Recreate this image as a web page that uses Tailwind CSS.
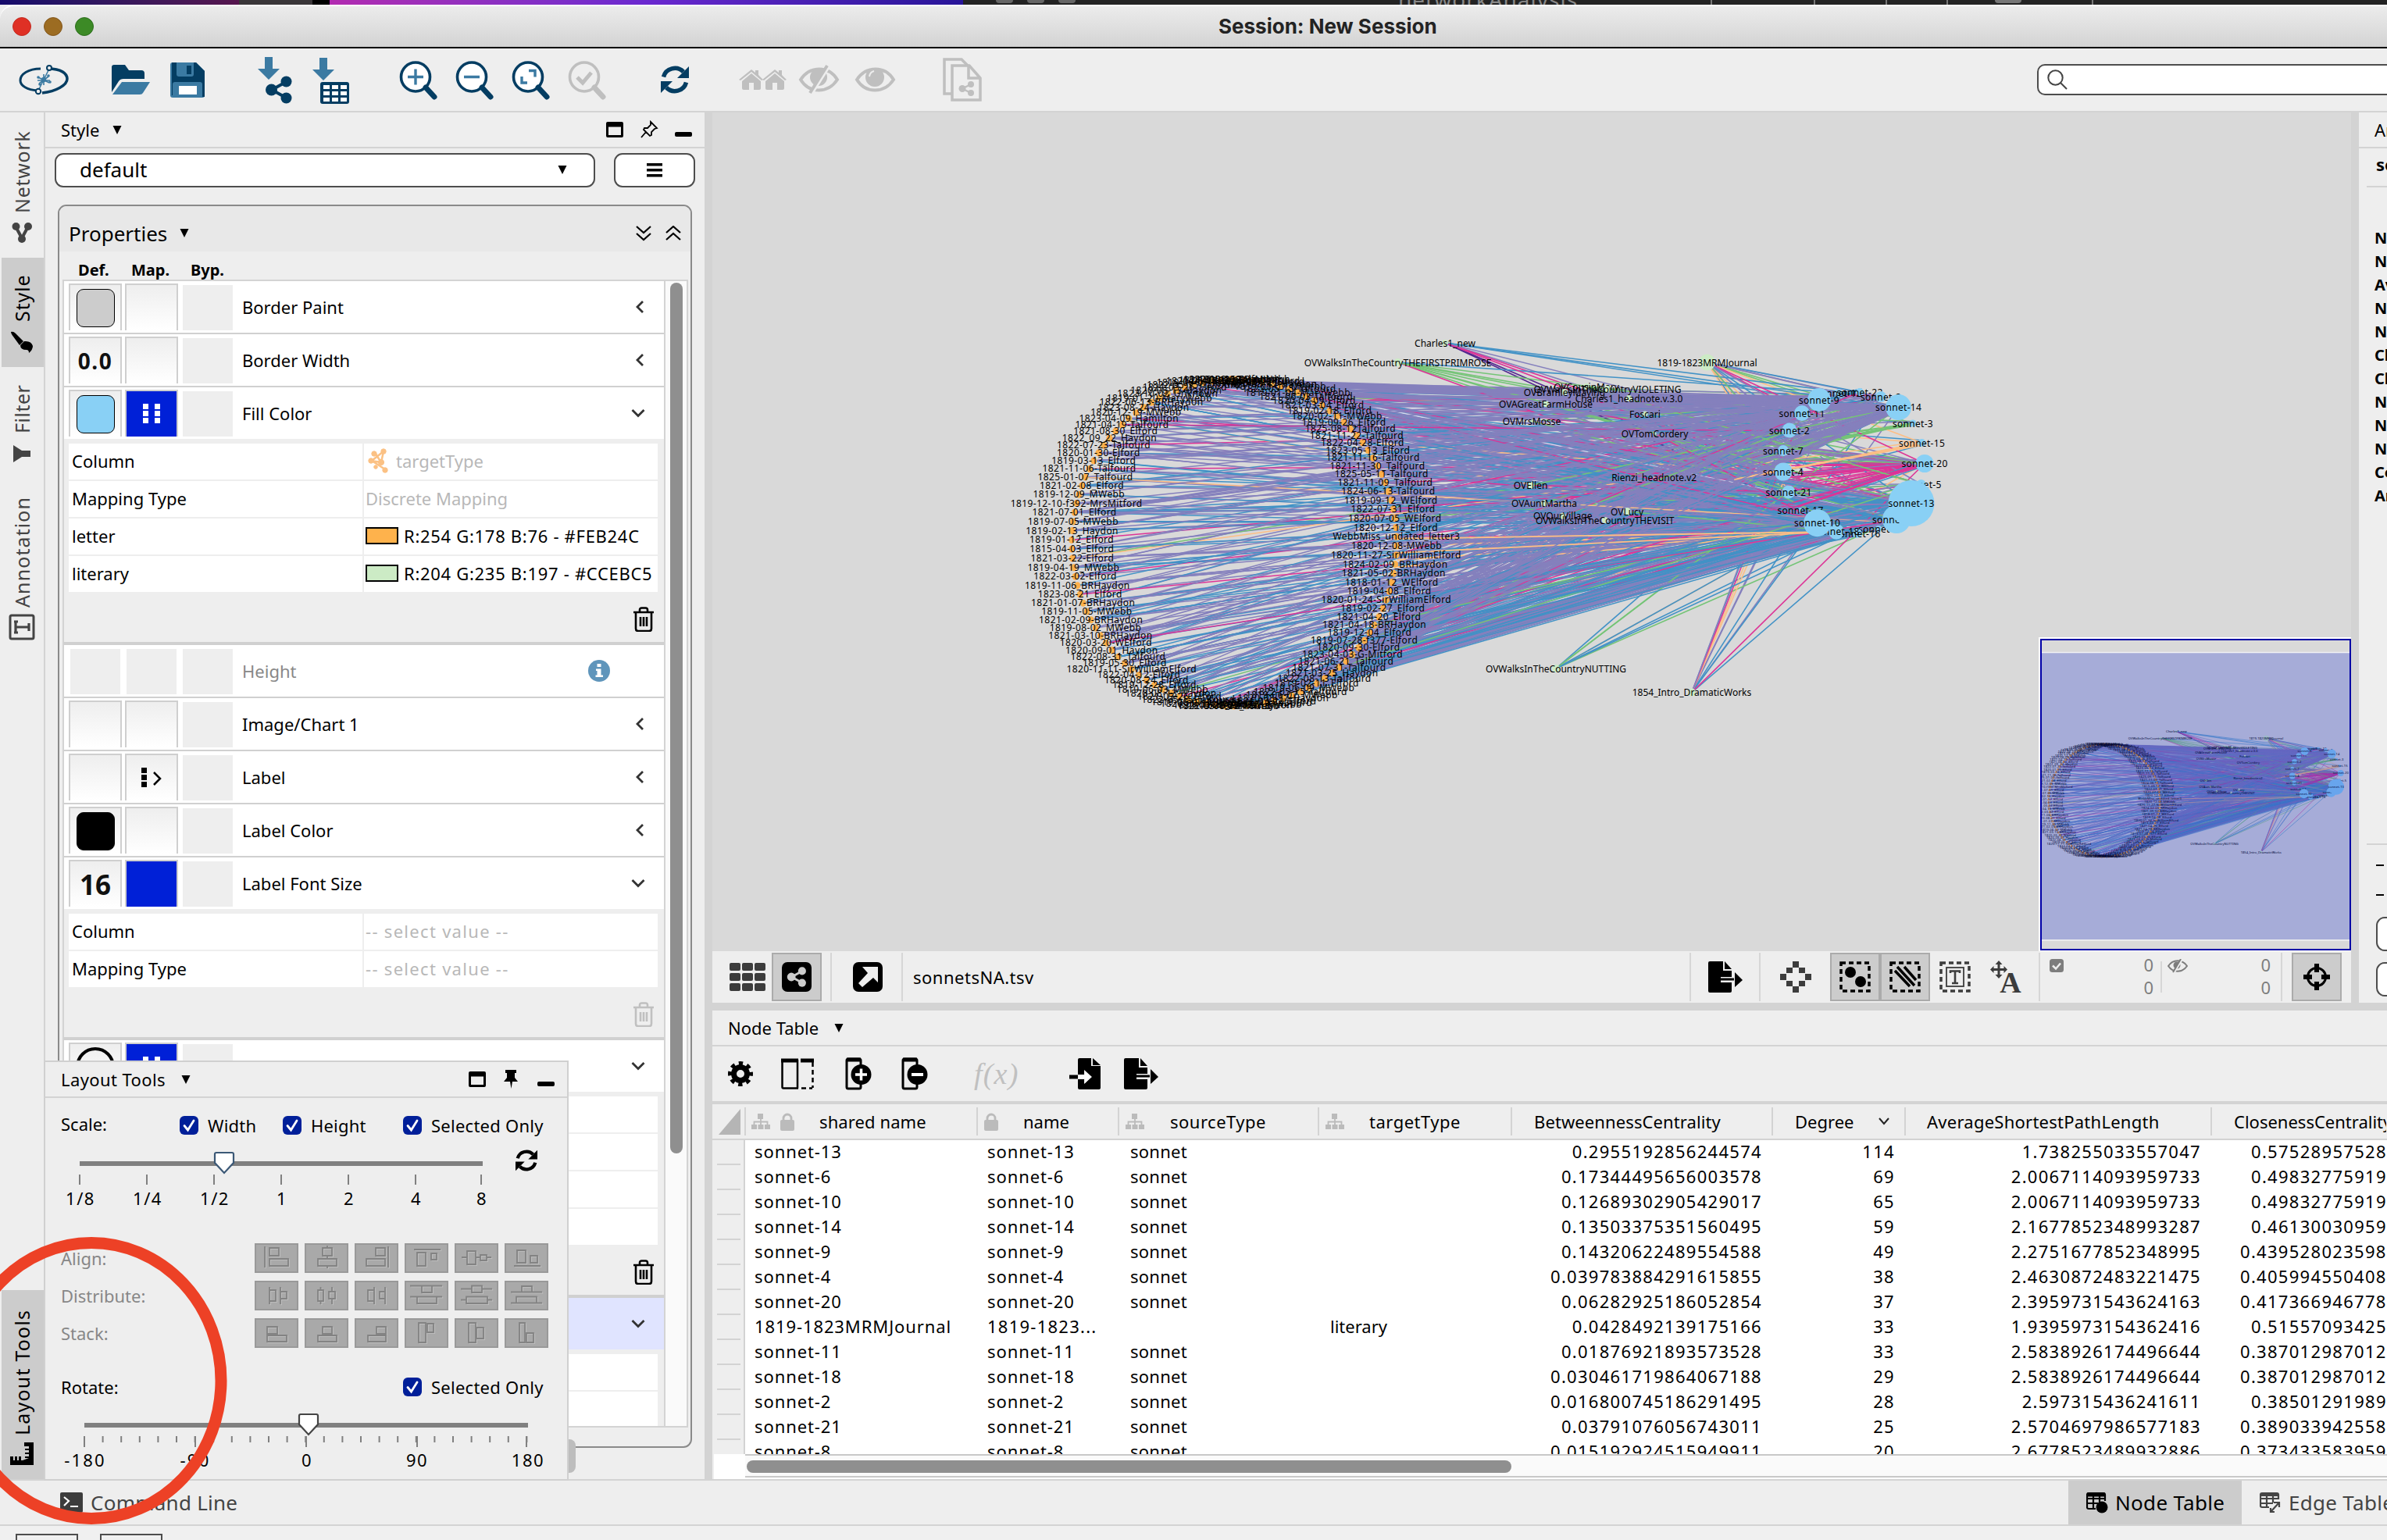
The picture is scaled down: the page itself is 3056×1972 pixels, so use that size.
<!DOCTYPE html>
<html lang="en">
<head>
<meta charset="utf-8">
<title>Session: New Session</title>
<script src="https://cdn.jsdelivr.net/npm/@tailwindcss/browser@4"></script>
</head>
<body class="m-0 overflow-hidden bg-[#15093f]">
<svg class="absolute h-0 w-0" aria-hidden="true">
  <defs>
    <symbol id="caret" viewBox="0 0 12 12"><path d="M0 0h12l-6 12z"/></symbol>
    <symbol id="trash" viewBox="0 0 28 32"><path d="M1 7h26M9 7V4q0-2.500 2.500-2.500h5q2.500 0 2.500 2.500v3M4 8v20q0 3 3 3h14q3 0 3-3V8M10 13v12M14 13v12M18 13v12" fill="none" stroke="currentColor" stroke-width="2.600"/></symbol>
    <symbol id="left" viewBox="0 0 14 18"><path d="M11 2L4 9l7 7" fill="none" stroke="#333" stroke-width="2.800"/></symbol>
    <symbol id="down" viewBox="0 0 18 14"><path d="M1.500 3L9 10.500 16.500 3" fill="none" stroke="#333" stroke-width="2.800"/></symbol>
    <symbol id="check" viewBox="0 0 24 24"><rect width="24" height="24" rx="6" fill="#001f99"/><path d="M6 12.500l4.500 5.500 7.500-12" fill="none" stroke="#fff" stroke-width="2.800" stroke-linecap="round"/></symbol>
    <symbol id="tree" viewBox="0 0 24 22"><path d="M8 1h7v7H8zM0 15h7v6H0zM8.500 15h7v6h-7zM17 15h7v6h-7z"/><path d="M12 7v9M3.500 16v-4.500h17V16" fill="none" stroke="currentColor" stroke-width="1.800"/></symbol>
    <symbol id="lock" viewBox="0 0 20 23"><rect x="1" y="9" width="18" height="14" rx="2"/><path d="M5 10V7a5 5 0 0 1 10 0v3" fill="none" stroke="currentColor" stroke-width="2.800"/></symbol>
    <symbol id="sync" viewBox="0 0 36 36"><path d="M3.500 14.500A15 14.500 0 0 1 29 8" fill="none" stroke="currentColor" stroke-width="5.500"/><path d="M36 1v15H21z"/><path d="M32.500 21.500A15 14.500 0 0 1 7 28" fill="none" stroke="currentColor" stroke-width="5.500"/><path d="M0 35V20h15z"/></symbol>
    <symbol id="share" viewBox="0 0 34 36"><circle cx="26.500" cy="7.500" r="7"/><circle cx="26.500" cy="28.500" r="7"/><circle cx="7.500" cy="18" r="7.500"/><path d="M26 8L8 18l18 10" fill="none" stroke="currentColor" stroke-width="4"/></symbol>
    <symbol id="win" viewBox="0 0 22 20"><path d="M2 0h18q2 0 2 2v16q0 2-2 2H2q-2 0-2-2V2Q0 0 2 0zM3 6.500V17h16V6.500z" fill-rule="evenodd"/></symbol>
    <symbol id="export" viewBox="0 0 45 40"><path d="M0 2Q0 0 2 0h17v12h11v8h-14v7h14v11q0 2-2 2H2q-2 0-2-2zM21 0l9 10h-9z"/><path d="M16 23h17" stroke="currentColor" stroke-width="3"/><path d="M34 14l10 10-10 9z"/></symbol>
  </defs>
</svg>

<div class="relative flex h-[1972px] w-[3056px] flex-col overflow-hidden bg-[#eeeeee] font-['Noto_Sans',sans-serif] text-[22px] leading-none text-black">

  <!-- desktop strip behind the window -->
  <div class="flex h-[6px] shrink-0">
    <div class="h-full w-[306px] bg-linear-to-r from-[#150a6b] to-[#56154e]"></div>
    <div class="h-full w-[94px] bg-[#3a3639]"></div>
    <div class="h-full w-[22px] bg-black"></div>
    <div class="h-full w-[811px] bg-linear-to-r from-[#b22ab0] via-[#6a28d0] to-[#271498]"></div>
    <div class="flex h-full grow items-start overflow-hidden bg-[#232323] pl-[42px] text-[24px] text-[#888]">
      <i class="h-[4px] w-[22px] rounded-b-full bg-[#666]"></i><i class="ml-[18px] h-[4px] w-[22px] rounded-b-full bg-[#666]"></i><i class="ml-[18px] h-[4px] w-[22px] rounded-b-full bg-[#666]"></i>
      <span class="-mt-[15px] ml-[413px] text-[28px] tracking-[1px]">networkAnalysis</span>
      <i class="ml-[170px] h-[6px] w-[2px] bg-[#777]"></i><i class="ml-[130px] h-[6px] w-[2px] bg-[#777]"></i><i class="ml-[90px] h-[6px] w-[2px] bg-[#777]"></i><i class="ml-[76px] h-[6px] w-[2px] bg-[#777]"></i><i class="ml-[60px] h-[4px] w-[34px] rounded-b-full bg-[#777]"></i><i class="ml-[90px] h-[6px] w-[2px] bg-[#777]"></i>
    </div>
  </div>

  <!-- title bar -->
  <div class="flex h-[56px] shrink-0 items-center rounded-tl-[18px] border-t-2 border-b-2 border-t-white border-b-black bg-linear-to-b from-[#ececec] to-[#d3d3d3] pl-[16px]">
    <i class="h-[24px] w-[24px] rounded-full border border-[#c32a20] bg-[#df3025]"></i>
    <i class="ml-[16px] h-[24px] w-[24px] rounded-full border border-[#83561b] bg-[#9c6c22]"></i>
    <i class="ml-[16px] h-[24px] w-[24px] rounded-full border border-[#2b6d1c] bg-[#3c8a26]"></i>
    <div class="ml-[1440px] font-[Inter,sans-serif] text-[26px] font-bold text-[#232323]">Session: New Session</div>
  </div>

  <!-- main toolbar -->
  <div class="flex h-[82px] shrink-0 items-start border-b-2 border-[#d3d3d3] pl-[22px]">
    <svg class="h-[80px] w-[68px] shrink-0" viewBox="22 62 68 80" fill="none" stroke="#043d62"><path d="M52 88c-16 0-26 7-26 15 0 7 9 12 22 13" stroke-width="3"/><path d="M62 88c16 0 24 6 24 13 0 8-14 16-32 18" stroke-width="3.500"/><path d="M62 90L50 114M56 95v14M49 99l14 7M50 107l12-9M48 103h16" stroke="#3b7aa2" stroke-width="1.600"/><circle cx="63" cy="87" r="3" fill="#eee" stroke-width="2"/><circle cx="49" cy="117" r="3.200" fill="#eee" stroke-width="2"/><g fill="#3b7aa2" stroke="none"><circle cx="56" cy="102" r="3.200"/><circle cx="49" cy="99" r="1.800"/><circle cx="64" cy="105" r="1.800"/><circle cx="51" cy="108" r="1.800"/><circle cx="62" cy="97" r="1.800"/></g></svg>
    <svg class="ml-[51px] h-[80px] w-[52px] shrink-0" viewBox="141 62 52 80"><path d="M143 118V86q0-3 3-3h14l5 7h16q4 0 4 4v7h-27q-4 0-6 3z" fill="#043d62"/><path d="M156 105h36l-9 14q-1 2-4 2h-35z" fill="#3b7aa2"/></svg>
    <svg class="ml-[24px] h-[80px] w-[46px] shrink-0" viewBox="217 62 46 80"><path d="M218 83q0-3 3-3h30l11 11v31q0 3-3 3h-38q-3 0-3-3z" fill="#3b7aa2"/><path d="M224 80h27l11 11v33h-3v-16q0-3-3-3h-32q-3 0-3 3v14h-1V80z" fill="#043d62"/><path d="M226 80h22v15q0 3-3 3h-16q-3 0-3-3z" fill="#3b7aa2"/><rect x="239" y="84" width="6" height="11" fill="#043d62"/><rect x="229" y="110" width="23" height="11" fill="#fff"/></svg>
    <svg class="ml-[65px] h-[80px] w-[48px] shrink-0" viewBox="328 62 48 80"><path d="M339 73h10v15h9l-14 14-14-14h9z" fill="#3b7aa2"/><use href="#share" x="340" y="97" width="34" height="36" fill="#043d62" class="text-[#043d62]"/></svg>
    <svg class="ml-[22px] h-[80px] w-[52px] shrink-0" viewBox="398 62 52 80"><path d="M409 74h10v15h9l-14 14-14-14h9z" fill="#3b7aa2"/><rect x="410" y="105" width="37" height="28" rx="3" fill="#043d62"/><path d="M414 109h8v5h-8zM425 109h8v5h-8zM436 109h8v5h-8zM414 117h8v5h-8zM425 117h8v5h-8zM436 117h8v5h-8zM414 125h8v5h-8zM425 125h8v5h-8zM436 125h8v5h-8z" fill="#fff"/></svg>
    <svg class="ml-[60px] h-[80px] w-[272px] shrink-0" viewBox="510 62 272 80" fill="none">
      <g stroke="#043d62"><circle cx="532" cy="98.500" r="18.500" stroke-width="3.600" fill="#fff"/><path d="M545 112l11 12" stroke-width="7" stroke-linecap="round"/><circle cx="604" cy="98.500" r="18.500" stroke-width="3.600" fill="#fff"/><path d="M617 112l11 12" stroke-width="7" stroke-linecap="round"/><circle cx="676" cy="98.500" r="18.500" stroke-width="3.600" fill="#fff"/><path d="M689 112l11 12" stroke-width="7" stroke-linecap="round"/></g>
      <g stroke="#bfbfbf"><circle cx="748" cy="98.500" r="18.500" stroke-width="3.600"/><path d="M761 112l11 12" stroke-width="7" stroke-linecap="round"/><path d="M739 99l7 7 11-13" stroke-width="5"/></g>
      <path d="M522 98.500h20M532 88.500v20M594 98.500h20M677 90.500h8v8M675 106h-7v-8" stroke="#3b7aa2" stroke-width="3.400"/>
    </svg>
    <svg class="ml-[64px] h-[80px] w-[36px] shrink-0 fill-[#043d62] text-[#043d62]"><use href="#sync" x="0" y="22" width="36" height="36"/></svg>
    <svg class="ml-[64px] h-[80px] w-[62px] shrink-0" viewBox="946 62 62 80" fill="#bfbfbf"><g id="hs"><path d="M946 102l16-13 5 4v-3h4v6l6 6-2 1-13-11-14 11z"/><path d="M950 104l12-10 12 10v9q0 2-2 2h-7v-9h-6v9h-7q-2 0-2-2z"/></g><use href="#hs" x="30"/></svg>
    <svg class="ml-[14px] h-[80px] w-[54px] shrink-0" viewBox="1022 62 54 80" fill="none" stroke="#bfbfbf" stroke-width="4"><path d="M1025 102c12-18 36-18 47 0c-12 18-36 18-47 0z"/><circle cx="1048" cy="99" r="11" fill="#bfbfbf" stroke="none"/><path d="M1062 84l-24 38" stroke="#eee" stroke-width="4"/><path d="M1059 84l-22 35"/></svg>
    <svg class="ml-[18px] h-[80px] w-[54px] shrink-0" viewBox="1094 62 54 80" fill="none" stroke="#bfbfbf" stroke-width="4"><path d="M1097 102c12-18 36-18 47 0c-12 18-36 18-47 0z"/><circle cx="1120" cy="99" r="12" fill="#bfbfbf" stroke="none"/><path d="M1113 98q1-6 6-7" stroke="#eee" stroke-width="2"/></svg>
    <svg class="ml-[58px] h-[80px] w-[52px] shrink-0" viewBox="1206 62 52 80" fill="#eee" stroke="#bfbfbf" stroke-width="3.500"><path d="M1209 76h22l8 8v36h-30z"/><path d="M1219 84h22l14 16v28h-36z"/><path d="M1240 84v16h15" fill="none"/><g fill="#bfbfbf" stroke="none"><circle cx="1243" cy="108" r="4"/><circle cx="1243" cy="119" r="4"/><circle cx="1232" cy="113.500" r="4.500"/></g><path d="M1243 108l-11 5.500 11 5.500" fill="none" stroke-width="2.500"/></svg>
    <div class="mt-[20px] ml-[1350px] flex h-[40px] w-[500px] shrink-0 items-center rounded-[10px] border-2 border-[#4d4d4d] bg-white pl-[11px]">
      <svg class="h-[26px] w-[28px]" viewBox="0 0 28 26" fill="none" stroke="#444" stroke-width="2"><circle cx="10.500" cy="10.500" r="9.200"/><path d="M17 17l8 8"/></svg>
    </div>
  </div>

  <!-- workspace -->
  <div class="flex h-[1750px] shrink-0">

    <!-- vertical tabs -->
    <div class="ml-[2px] flex w-[56px] shrink-0 flex-col border-r-2 border-[#d3d3d3] pr-[2px] text-[25px] text-[#444]">
      <div class="flex h-[186px] flex-col items-center pt-[23px]">
        <span class="h-[106px] rotate-180 tracking-[0.7px] [writing-mode:vertical-rl]">Network</span>
        <svg class="mt-[12px] h-[26px] w-[26px]" viewBox="0 0 26 26" fill="#444"><circle cx="5.500" cy="5" r="5"/><circle cx="21" cy="5" r="5"/><circle cx="13" cy="21" r="5"/><path d="M5 5l8 15 8-15" fill="none" stroke="#444" stroke-width="4"/></svg>
      </div>
      <div class="-mr-[2px] flex h-[140px] flex-col items-center bg-[#cccccc] pt-[22px] pr-[2px] text-black">
        <span class="h-[60px] rotate-180 tracking-[0.9px] [writing-mode:vertical-rl]">Style</span>
        <svg class="mt-[12px] h-[28px] w-[30px]" viewBox="0 0 30 28"><path d="M1 1q3-1 6 2l10 10-5 5L4 7Q1 3 1 1zM18 13q9-1 11 6 0 5-5 9 0-4-3-4-8 0-8-6z"/></svg>
      </div>
      <div class="flex h-[142px] flex-col items-center pt-[21px]">
        <span class="h-[64px] rotate-180 tracking-[0.5px] [writing-mode:vertical-rl]">Filter</span>
        <svg class="mt-[15px] h-[22px] w-[24px]" viewBox="0 0 24 22" fill="#444"><path d="M1 0l11 7h11v8H12L1 22z"/></svg>
      </div>
      <div class="flex h-[220px] flex-col items-center pt-[24px]">
        <span class="h-[142px] rotate-180 tracking-[1.1px] [writing-mode:vertical-rl]">Annotation</span>
        <svg class="mt-[8px] h-[34px] w-[34px]" viewBox="0 0 34 34" fill="none" stroke="#444"><rect x="2" y="2" width="30" height="30" rx="2" stroke-width="3"/><path d="M9 10v14M9 17h17M26 12v10M7 10h5M7 24h5" stroke-width="3.200"/></svg>
      </div>
      <div class="mt-auto -mr-[2px] flex h-[242px] flex-col items-center bg-[#cccccc] pt-[24px] pr-[2px] text-black">
        <span class="h-[162px] rotate-180 tracking-[1.2px] [writing-mode:vertical-rl]">Layout Tools</span>
        <svg class="mt-[9px] h-[29px] w-[30px]" viewBox="0 0 30 29"><path d="M18 0h12v29H0V18h4v5h2v-5h3v5h2v-5h3v5h2L24 20h-5v-2h5v-3h-5v-2h5v-3h-5V8h5V5h-6z"/></svg>
      </div>
    </div>

    <!-- style panel -->
    <div class="flex w-[844px] shrink-0 flex-col">
      <div class="flex h-[46px] shrink-0 items-center border-b-2 border-[#d3d3d3] pl-[20px]">
        <span class="w-[50px]">Style</span>
        <svg class="ml-[16px] h-[11px] w-[12px]"><use href="#caret"/></svg>
        <svg class="ml-auto h-[20px] w-[22px]"><use href="#win"/></svg>
        <svg class="ml-[21px] h-[24px] w-[24px]" viewBox="0 0 24 24" fill="none" stroke="#000" stroke-width="1.800"><path d="M14 2l8 8-3 1-4 4v4l-2 1-8-8 1-2h4l4-4zM8 15l-6 7"/></svg>
        <i class="mt-[12px] mr-[16px] ml-[21px] h-[6px] w-[22px] rounded-[2px] bg-black"></i>
      </div>
      <div class="mt-[6px] flex h-[44px] shrink-0 pl-[12px]">
        <div class="flex w-[692px] items-center rounded-[11px] border-2 border-[#4d4d4d] bg-white pr-[34px] pb-[2px] pl-[30px] text-[26px]">default<svg class="ml-auto h-[11px] w-[12px]"><use href="#caret"/></svg></div>
        <div class="ml-[24px] flex w-[104px] items-center justify-center rounded-[11px] border-2 border-[#4d4d4d] bg-white"><svg class="h-[18px] w-[22px]" viewBox="0 0 22 18"><path d="M1 0h20v3.500H1zM1 7h20v3.500H1zM1 14h20v3.500H1z"/></svg></div>
      </div>
      <div class="mt-[22px] ml-[16px] flex h-[1592px] w-[812px] shrink-0 flex-col overflow-hidden rounded-[11px] border-2 border-[#8a8a8a]">
        <div class="flex h-[58px] shrink-0 items-center bg-[#e8e8e8] pt-[11px] pr-[12px] pl-[12px] text-[26px]">
          <span class="w-[124px]">Properties</span><svg class="ml-[18px] h-[11px] w-[12px]"><use href="#caret"/></svg>
          <svg class="ml-auto h-[20px] w-[58px]" viewBox="0 0 58 20" fill="none" stroke="#000" stroke-width="2.200"><path d="M1 1l9 8 9-8M1 10l9 8 9-8M39 9l9-8 9 8M39 18l9-8 9 8"/></svg>
        </div>
        <div class="flex h-[36px] shrink-0 items-center pt-[11px] pl-[24px] text-[20px] font-bold"><span class="w-[68px]">Def.</span><span class="w-[76px]">Map.</span><span>Byp.</span></div>
        <div class="ml-[4px] flex h-[1470px] w-[801px] shrink-0 border-2 border-[#d3d3d3]">
          <div id="props" class="flex w-[768px] shrink-0 flex-col overflow-hidden"></div>
          <div class="grow border-l-2 border-[#d3d3d3] bg-[#fafafa] pt-[2px] pl-[6px]"><div class="h-[1115px] w-[16px] rounded-full bg-[#8f8f8f]"></div></div>
        </div>
      </div>
    </div>

    <div class="w-[10px] shrink-0 bg-[#d3d3d3]"></div>

    <!-- right-hand side: network view above the table -->
    <div class="flex w-[2144px] shrink-0 flex-col">
      <div class="flex h-[1140px] shrink-0">
        <div class="flex w-[2098px] shrink-0 flex-col">
          <svg class="h-[1074px] w-[2098px] shrink-0 bg-[#d9d9d9]" viewBox="912 144 2098 1074">
            <g id="net" font-family="'Noto Sans', sans-serif" font-size="12" text-anchor="middle"></g>
            <rect x="2610" y="816" width="400" height="402" fill="#fff"/>
            <rect x="2613" y="819" width="396" height="397" fill="#d9d9d9"/>
            <clipPath id="mini"><rect x="2613" y="819" width="396" height="397"/></clipPath>
            <g clip-path="url(#mini)"><use href="#net" transform="translate(2152.600 785.200) scale(0.3426 0.345)"/></g>
            <rect x="2613" y="836" width="396" height="367" fill="#0019d6" fill-opacity="0.235"/>
            <path d="M2613 835.500h396M2613 1204h396" stroke="#f0f0f4" stroke-width="1.500"/>
            <rect x="2613" y="819" width="396" height="397" fill="none" stroke="#0000a6" stroke-width="2"/>
          </svg>
          <!-- view toolbar -->
          <div class="flex h-[66px] shrink-0 items-center">
            <svg class="ml-[22px] h-[36px] w-[46px] fill-[#3c3c3c]" viewBox="0 0 46 36"><path d="M2 0h10q2 0 2 2v6q0 2-2 2H2Q0 10 0 8V2Q0 0 2 0zM18 0h10q2 0 2 2v6q0 2-2 2H18q-2 0-2-2V2q0-2 2-2zM34 0h10q2 0 2 2v6q0 2-2 2H34q-2 0-2-2V2q0-2 2-2zM2 13h10q2 0 2 2v6q0 2-2 2H2q-2 0-2-2v-6q0-2 2-2zM18 13h10q2 0 2 2v6q0 2-2 2H18q-2 0-2-2v-6q0-2 2-2zM34 13h10q2 0 2 2v6q0 2-2 2H34q-2 0-2-2v-6q0-2 2-2zM2 26h10q2 0 2 2v6q0 2-2 2H2q-2 0-2-2v-6q0-2 2-2zM18 26h10q2 0 2 2v6q0 2-2 2H18q-2 0-2-2v-6q0-2 2-2zM34 26h10q2 0 2 2v6q0 2-2 2H34q-2 0-2-2v-6q0-2 2-2z"/></svg>
            <div class="ml-[8px] flex h-[62px] w-[64px] items-center justify-center border-2 border-[#ababab] bg-[#cccccc]"><svg class="h-[38px] w-[38px] text-[#ccc]" viewBox="0 0 38 38"><rect width="38" height="38" rx="7"/><use href="#share" x="6" y="6" width="26" height="26" fill="#ccc"/></svg></div>
            <i class="ml-[11px] h-[62px] w-[2px] bg-[#d6d6d6]"></i>
            <svg class="ml-[27px] h-[38px] w-[38px]" viewBox="0 0 38 38"><rect width="38" height="38" rx="7"/><path d="M12 6h20v20l-6-6L12 32l-5-5 12-13z" fill="#eee"/></svg>
            <i class="ml-[24px] h-[62px] w-[2px] bg-[#d6d6d6]"></i>
            <span class="ml-[13px] tracking-[0.5px]">sonnetsNA.tsv</span>
            <i class="ml-auto h-[62px] w-[2px] bg-[#d6d6d6]"></i>
            <svg class="ml-[22px] h-[40px] w-[45px] text-black"><use href="#export"/></svg>
            <i class="ml-[20px] h-[62px] w-[2px] bg-[#d6d6d6]"></i>
            <svg class="ml-[25px] h-[40px] w-[40px] fill-[#3c3c3c]" viewBox="0 0 40 40"><path d="M16 0h8v8h-8zM8 8h8v7H8zM24 8h8v7h-8zM0 16h8v8H0zM32 16h8v8h-8zM8 25h8v7H8zM24 25h8v7h-8zM16 32h8v8h-8z"/></svg>
            <div class="ml-[24px] flex h-[62px] w-[64px] items-center justify-center border-2 border-[#ababab] bg-[#cccccc]"><svg class="h-[40px] w-[40px]" viewBox="0 0 40 40"><rect x="2" y="2" width="36" height="36" fill="none" stroke="#000" stroke-width="3.500" stroke-dasharray="6 4"/><circle cx="14" cy="14" r="7"/><circle cx="27" cy="26" r="7"/></svg></div>
            <div class="flex h-[62px] w-[64px] items-center justify-center border-2 border-[#ababab] bg-[#cccccc]"><svg class="h-[40px] w-[40px]" viewBox="0 0 40 40" fill="none" stroke="#000"><rect x="2" y="2" width="36" height="36" stroke-width="3.500" stroke-dasharray="6 4"/><path d="M7 12l19 20M10 7l22 24M19 7l15 17" stroke-width="3.500"/></svg></div>
            <svg class="ml-[12px] h-[40px] w-[40px]" viewBox="0 0 40 40" fill="none" stroke="#3c3c3c"><rect x="2" y="2" width="36" height="36" stroke-width="3.500" stroke-dasharray="6 4"/><rect x="9" y="8" width="22" height="24" stroke-width="1.800"/><path d="M14 15v-2.500h12V15M20 13v15M16 28h8" stroke-width="2.600"/></svg>
            <svg class="ml-[25px] h-[42px] w-[40px]" viewBox="0 0 40 42" fill="#3c3c3c"><path d="M11 0l4.500 5h-3v5h5V7l4.500 4.500-4.500 4.500v-3h-5v5h3L11 23l-4.500-5h3v-5h-5v3L0 11.500 4.500 7v3h5V5h-3z"/><text x="26" y="41" font-size="38" font-weight="700" font-family="'Liberation Serif', serif" text-anchor="middle">A</text></svg>
            <i class="ml-[22px] h-[62px] w-[2px] bg-[#d6d6d6]"></i>
            <div class="flex h-[62px] w-[154px] pt-[8px] pr-[9px] pl-[12px] text-[#7d7d7d]">
              <svg class="h-[17px] w-[18px]" viewBox="0 0 18 17"><rect width="18" height="17" rx="3.500" fill="#7d7d7d"/><path d="M4 8.500l4 4 6-7" fill="none" stroke="#eee" stroke-width="2.500"/></svg>
              <span class="-mt-[7px] ml-auto text-right leading-[29px]">0<br>0</span>
            </div>
            <i class="h-[40px] w-[2px] bg-[#d6d6d6]"></i>
            <div class="flex h-[62px] w-[152px] pt-[8px] pr-[13px] pl-[7px] text-[#7d7d7d]">
              <svg class="h-[18px] w-[26px]" viewBox="0 0 26 18" fill="none" stroke="#7d7d7d" stroke-width="2"><path d="M1 9c6-9 18-9 24 0c-6 9-18 9-24 0z"/><circle cx="12" cy="8" r="4.500" fill="#7d7d7d" stroke="none"/><path d="M19 0L8 18" stroke="#eee" stroke-width="2.500"/><path d="M17 0L7 17"/></svg>
              <span class="-mt-[7px] ml-auto text-right leading-[29px]">0<br>0</span>
            </div>
            <i class="h-[62px] w-[2px] bg-[#d6d6d6]"></i>
            <div class="mr-[12px] ml-[12px] flex h-[62px] w-[64px] shrink-0 items-center justify-center border-2 border-[#ababab] bg-[#cccccc]"><svg class="h-[34px] w-[34px]" viewBox="0 0 34 34" fill="none" stroke="#000"><circle cx="17" cy="17" r="11.500" stroke-width="3"/><path d="M17 0v11M17 23v11M0 17h11M23 17h11" stroke-width="6"/></svg></div>
          </div>
        </div>
        <div class="w-[10px] shrink-0 bg-[#d3d3d3]"></div>
        <!-- analysis panel, cut by the screen edge -->
        <div class="flex w-[36px] shrink-0 flex-col overflow-hidden whitespace-nowrap">
          <div class="flex h-[46px] shrink-0 items-center border-b-2 border-[#d3d3d3] pl-[20px]">Analyzer</div>
          <div class="ml-[10px] flex h-[50px] shrink-0 items-center border-b-2 border-[#d3d3d3] pb-[9px] pl-[12px] font-bold">sonnetsNA.tsv</div>
          <div class="mt-[50px] ml-[20px] flex shrink-0 flex-col text-[20px] leading-[30px] font-bold"><span>Number of nodes</span><span>Number of edges</span><span>Avg. number of neighbors</span><span>Network diameter</span><span>Network radius</span><span>Characteristic path length</span><span>Clustering coefficient</span><span>Network density</span><span>Network heterogeneity</span><span>Network centralization</span><span>Connected components</span><span>Analysis time (sec)</span></div>
          <div class="mt-[430px] ml-[10px] h-[2px] shrink-0 bg-[#d3d3d3]"></div>
          <i class="mt-[25px] ml-[22px] h-[2px] w-[10px] shrink-0 bg-black"></i>
          <i class="mt-[36px] ml-[22px] h-[2px] w-[10px] shrink-0 bg-black"></i>
          <div class="mt-[27px] ml-[22px] h-[44px] w-[80px] shrink-0 rounded-[11px] border-2 border-[#4d4d4d] bg-white"></div>
          <div class="mt-[14px] ml-[22px] h-[44px] w-[80px] shrink-0 rounded-[11px] border-2 border-[#4d4d4d] bg-white"></div>
        </div>
      </div>

      <div class="h-[10px] shrink-0 bg-[#d3d3d3]"></div>
      <div class="flex h-[46px] shrink-0 items-center border-b-2 border-[#d3d3d3] pl-[20px]"><span class="w-[120px] whitespace-nowrap">Node Table</span><svg class="ml-[16px] h-[11px] w-[12px]"><use href="#caret"/></svg></div>
      <div class="flex h-[74px] shrink-0 items-center border-b-4 border-[#d3d3d3] pl-[20px]">
        <svg class="h-[32px] w-[32px]" viewBox="0 0 32 32" fill="none" stroke="#000"><circle cx="16" cy="16" r="8.500" stroke-width="7"/><circle cx="16" cy="16" r="13.500" stroke-width="5" stroke-dasharray="5.300 5.300" stroke-dashoffset="2.600"/></svg>
        <svg class="ml-[36px] h-[40px] w-[42px]" viewBox="0 0 42 40" fill="none" stroke="#000" stroke-width="2.500"><path d="M22 38.500H3q-1.500 0-1.500-1.500V2M21 2v36.500"/><path d="M0 3h22M25 3h17" stroke-width="5"/><path d="M40.500 5v33M26 38.500h14" stroke-dasharray="6 4"/></svg>
        <svg class="ml-[40px] h-[42px] w-[34px]" viewBox="0 0 34 42" fill="none" stroke="#000" stroke-width="3"><path d="M20 10V4q0-2-2-2H4Q2 2 2 4v34q0 2 2 2h14q2 0 2-2v-4"/><path d="M2 3h18" stroke-width="5"/><circle cx="20.500" cy="22" r="13" fill="#000" stroke="none"/><path d="M13 22h15M20.500 14.500v15" stroke="#fff" stroke-width="3.500"/></svg>
        <svg class="ml-[38px] h-[42px] w-[34px]" viewBox="0 0 34 42" fill="none" stroke="#000" stroke-width="3"><path d="M20 10V4q0-2-2-2H4Q2 2 2 4v34q0 2 2 2h14q2 0 2-2v-4"/><path d="M2 3h18" stroke-width="5"/><circle cx="20.500" cy="22" r="13" fill="#000" stroke="none"/><path d="M13 22h15" stroke="#fff" stroke-width="4"/></svg>
        <span class="ml-[59px] w-[60px] font-['Liberation_Serif',serif] text-[38px] tracking-[1.2px] whitespace-nowrap text-[#c0c0c0] italic">f(x)</span>
        <svg class="ml-[62px] h-[40px] w-[41px]" viewBox="0 0 41 40"><path d="M11 2q0-2 2-2h15v10h12v28q0 2-2 2H13q-2 0-2-2V27h8v6l10-9-10-9v6h-8zM30 0l10 9H30z"/><path d="M0 24h11" stroke="#000" stroke-width="5"/><path d="M11 21.500h9v-5l8 7.500-8 8v-5.500h-9z" fill="#fff"/></svg>
        <svg class="ml-[29px] h-[40px] w-[45px] text-black"><use href="#export"/></svg>
      </div>
      <!-- column headings -->
      <div class="flex h-[46px] shrink-0 items-center border-b-2 border-[#d3d3d3] whitespace-nowrap text-[#bbb]">
        <svg class="ml-[8px] h-[33px] w-[28px]" viewBox="0 0 28 33"><path d="M28 0v33H0z" fill="#b5b5b5"/></svg>
        <i class="ml-[5px] h-[36px] w-[2px] bg-[#d3d3d3]"></i>
        <div class="flex w-[295px] items-center"><svg class="ml-[7px] h-[22px] w-[24px] fill-[#bbb]"><use href="#tree"/></svg><svg class="ml-[12px] h-[23px] w-[20px] fill-[#bbb]"><use href="#lock"/></svg><span class="ml-[31px] tracking-[0.1px] text-black">shared name</span></div>
        <i class="h-[36px] w-[2px] bg-[#d3d3d3]"></i>
        <div class="flex w-[179px] items-center"><svg class="ml-[7px] h-[23px] w-[20px] fill-[#bbb]"><use href="#lock"/></svg><span class="ml-[31px] text-black">name</span></div>
        <i class="h-[36px] w-[2px] bg-[#d3d3d3]"></i>
        <div class="flex w-[254px] items-center"><svg class="ml-[8px] h-[22px] w-[24px] fill-[#bbb]"><use href="#tree"/></svg><span class="ml-[33px] tracking-[0.5px] text-black">sourceType</span></div>
        <i class="h-[36px] w-[2px] bg-[#d3d3d3]"></i>
        <div class="flex w-[245px] items-center"><svg class="ml-[8px] h-[22px] w-[24px] fill-[#bbb]"><use href="#tree"/></svg><span class="ml-[32px] tracking-[0.5px] text-black">targetType</span></div>
        <i class="h-[36px] w-[2px] bg-[#d3d3d3]"></i>
        <div class="w-[332px] pl-[28px] tracking-[0.1px] text-black">BetweennessCentrality</div>
        <i class="h-[36px] w-[2px] bg-[#d3d3d3]"></i>
        <div class="flex w-[168px] items-center pl-[28px] text-black">Degree<svg class="ml-[32px] h-[10px] w-[14px]" viewBox="0 0 14 10" fill="none" stroke="#222" stroke-width="2"><path d="M1 1l6 7 6-7"/></svg></div>
        <i class="h-[36px] w-[2px] bg-[#d3d3d3]"></i>
        <div class="w-[390px] pl-[27px] tracking-[0.25px] text-black">AverageShortestPathLength</div>
        <i class="h-[36px] w-[2px] bg-[#d3d3d3]"></i>
        <div class="w-[223px] overflow-hidden py-1 pl-[28px] text-black">ClosenessCentrality</div>
      </div>
      <div class="ml-[2px] flex h-[402px] shrink-0 overflow-hidden">
        <div id="gutter" class="flex w-[40px] shrink-0 flex-col border-r-2 border-[#d3d3d3] px-[4px]"></div>
        <div id="rows" class="flex grow flex-col bg-white"></div>
      </div>
      <div class="ml-[2px] flex h-[32px] shrink-0 bg-white">
        <div class="ml-[40px] flex h-[30px] grow items-center border-t-2 border-b-2 border-t-[#c8c8c8] border-b-[#c8c8c8] bg-[#fafafa] pt-[2px] pl-[2px]"><div class="h-[16px] w-[979px] rounded-full bg-[#8f8f8f]"></div></div>
      </div>
    </div>
  </div>

  <!-- bottom bar -->
  <div class="flex h-[60px] shrink-0 border-t-2 border-b-2 border-[#d3d3d3] text-[26px] text-[#444]">
    <div class="flex items-center pl-[77px]"><svg class="h-[26px] w-[29px]" viewBox="0 0 29 26"><rect width="29" height="26" rx="2" fill="#3c3c3c"/><path d="M5 6l6 5-6 6M13 18h10" fill="none" stroke="#fff" stroke-width="2.200"/></svg><span class="ml-[10px] tracking-[0.25px]">Command Line</span></div>
    <div class="ml-auto flex w-[222px] shrink-0 items-center bg-[#cccccc] pl-[23px] whitespace-nowrap text-black">
      <svg class="h-[28px] w-[28px]" viewBox="0 0 28 28" fill="none" stroke="#000" stroke-width="2.200"><path d="M12 22H3q-2 0-2-2V4q0-2 2-2h19q2 0 2 2v8M1 9h23M1 15h14M9 5v17M17 5v9"/><path d="M1 4h23" stroke-width="5"/><circle cx="20" cy="20" r="7.500" fill="#000" stroke="none"/></svg><span class="ml-[9px] tracking-[0.3px]">Node Table</span></div>
    <div class="flex w-[186px] shrink-0 items-center overflow-hidden pl-[23px] whitespace-nowrap">
      <svg class="h-[28px] w-[28px] shrink-0" viewBox="0 0 28 28" fill="none" stroke="#444" stroke-width="2.200"><path d="M12 20H3q-2 0-2-2V4q0-2 2-2h19q2 0 2 2v6M1 9h23M1 15h16M9 5v15M17 5v9"/><path d="M1 4h23" stroke-width="4"/><path d="M14 26l11-12M18 14h7v6M14 21v5h5" /></svg><span class="ml-[9px] tracking-[0.3px]">Edge Table</span></div>
  </div>
  <div class="flex grow gap-[28px] bg-[#f0f0f0] pt-[10px] pl-[20px]"><div class="h-[30px] w-[80px] border-2 border-[#4d4d4d]"></div><div class="h-[30px] w-[80px] border-2 border-[#4d4d4d]"></div></div>

  <!-- scroll knob and floating layout tools -->
  <div class="absolute top-[1843px] left-[700px] h-[43px] w-[37px] rounded-r-[8px] bg-[#bdbdbd]"></div>
  <div class="absolute top-[1358px] left-[56px] flex h-[538px] w-[672px] flex-col border-2 border-[#d0d0d0] bg-[#eeeeee]">
    <div class="flex h-[46px] shrink-0 items-center border-b-2 border-[#d3d3d3] pl-[20px]"><span class="w-[137px] tracking-[0.4px]">Layout Tools</span><svg class="ml-[17px] h-[11px] w-[12px]"><use href="#caret"/></svg>
      <svg class="ml-auto h-[20px] w-[22px]"><use href="#win"/></svg>
      <svg class="ml-[22px] h-[24px] w-[20px]" viewBox="0 0 20 24"><path d="M3 0h14v4h-2v6l4 5H1l4-5V4H3zM9 15h3l-1.500 9z"/></svg>
      <i class="mt-[12px] mr-[16px] ml-[24px] h-[6px] w-[22px] rounded-[2px] bg-black"></i></div>
    <div class="mt-[21px] flex h-[28px] shrink-0 items-center pl-[20px]"><span class="-mt-[4px] w-[152px]">Scale:</span>
      <div class="flex w-[132px] items-center tracking-[0.2px]"><svg class="mr-[12px] h-[24px] w-[24px]"><use href="#check"/></svg>Width</div>
      <div class="flex w-[154px] items-center tracking-[0.2px]"><svg class="mr-[12px] h-[24px] w-[24px]"><use href="#check"/></svg>Height</div>
      <div class="flex items-center tracking-[0.25px]"><svg class="mr-[12px] h-[24px] w-[24px]"><use href="#check"/></svg>Selected Only</div></div>
    <svg class="mt-[16px] h-[86px] w-[668px] shrink-0" viewBox="58 1470 668 86" font-size="22" text-anchor="middle">
      <path d="M102 1489h516" stroke="#808080" stroke-width="6"/><path d="M102 1503v13M188 1503v13M274 1503v13M360 1503v13M446 1503v13M532 1503v13M616 1503v13" stroke="#808080" stroke-width="2"/>
      <path d="M275 1477q0-2 2-2h20q2 0 2 2v11l-12 13-12-13z" fill="#fff" stroke="#3b5876" stroke-width="2.200"/>
      <g letter-spacing="1.500"><text x="103" y="1542">1/8</text><text x="189" y="1542">1/4</text><text x="275" y="1542">1/2</text><text x="361" y="1542">1</text><text x="447" y="1542">2</text><text x="533" y="1542">4</text><text x="617" y="1542">8</text></g>
      <use href="#sync" x="660" y="1471" width="28" height="28"/>
    </svg>
    <div id="align" class="mt-[35px] flex shrink-0 flex-col gap-[10px] pl-[20px] text-[#878787]"></div>
    <div class="mt-[38px] flex h-[24px] shrink-0 items-center pl-[20px]"><span class="w-[438px]">Rotate:</span><div class="flex items-center tracking-[0.25px]"><svg class="mr-[12px] h-[24px] w-[24px]"><use href="#check"/></svg>Selected Only</div></div>
    <svg class="mt-[18px] h-[86px] w-[668px] shrink-0" viewBox="58 1804 668 86" font-size="22" text-anchor="middle">
      <path d="M108 1823h568" stroke="#808080" stroke-width="6"/>
      <path d="M108 1837v14M250 1837v14M392 1837v14M534 1837v14M674 1837v14" stroke="#808080" stroke-width="2"/><path d="M108 1841h568" stroke="#808080" stroke-width="8" stroke-dasharray="2 21.600" stroke-dashoffset="1"/>
      <path d="M383 1811q0-2 2-2h20q2 0 2 2v11l-12 13-12-13z" fill="#fff" stroke="#444" stroke-width="2.200"/>
      <g letter-spacing="1.500"><text x="109" y="1876" letter-spacing="2.200">-180</text><text x="250" y="1876" letter-spacing="2.200">-90</text><text x="393" y="1876">0</text><text x="534" y="1876">90</text><text x="676" y="1876">180</text></g>
    </svg>
  </div>
  <svg class="absolute top-[1570px] left-0 h-[400px] w-[310px]" viewBox="0 1570 310 400"><ellipse cx="117" cy="1768" rx="166" ry="176.500" fill="none" stroke="#ed4126" stroke-width="15"/></svg>
</div>

<script>
/* property list */
const cell = (inner = '') => `<div class="flex h-[60px] w-[68px] items-center justify-center border-2 border-b-0 border-[#cfcfcf] bg-linear-to-b from-[#eeeeee] to-white text-[#111] font-bold">${inner}</div>`;
const flat = '<div class="mx-[2px] mt-[2px] h-[58px] w-[64px] bg-[#eeeeee]"></div>';
const swatch = c => `<div class="h-[49px] w-[49px] rounded-[9px] border border-black" style="background:${c}"></div>`;
const blue = inner => `<div class="h-[60px] w-[68px] border-2 border-b-0 border-[#cfcfcf] bg-[#0020d7] flex items-center justify-center">${inner}</div>`;
const dots = '<svg class="h-[26px] w-[24px] fill-white" viewBox="0 0 24 26"><path d="M1 0h7v7H1zM16 0h7v7h-7zM1 9h7v7H1zM16 9h7v7h-7zM1 18h7v7H1zM16 18h7v7h-7z"/></svg>';
const pass = '<svg class="h-[26px] w-[28px]" viewBox="0 0 28 26"><path d="M1 0h7v7H1zM1 9h7v7H1zM1 18h7v7H1z"/><path d="M17 6l8 8-8 8" fill="none" stroke="#000" stroke-width="2.500"/></svg>';
const L = '<svg class="h-[18px] w-[14px]"><use href="#left"/></svg>', D = '<svg class="h-[14px] w-[18px]"><use href="#down"/></svg>';
const row = (a, b, label, chev, o = {}) => `<div class="flex h-[66px] shrink-0 items-center pl-[6px] ${o.bg || 'bg-white'}"><div class="flex h-[60px] gap-[4px]">${a}${b}${flat}</div><span class="ml-[10px] ${o.fg || ''}">${label}</span><div class="ml-auto flex items-center ${o.pad || 'pr-[24px]'}">${chev}</div></div>`;
const line = '<div class="h-[2px] shrink-0 bg-[#d0d0d0]"></div>', thick = '<div class="h-[4px] shrink-0 bg-[#d0d0d0]"></div>';
const sub = (rows, tone) => `<div class="flex shrink-0 flex-col gap-[2px] bg-[#eeeeee] pt-[6px] pr-[8px] pl-[6px]">${rows.map(r => `<div class="flex h-[46px] gap-[2px] whitespace-nowrap"><div class="flex w-[376px] items-center bg-white pb-[2px] pl-[4px]">${r[0]}</div><div class="flex grow items-center bg-white pb-[2px] pl-[2px]">${r[1]}</div></div>`).join('')}<div class="flex h-[62px] items-center justify-end pt-[4px] pr-[4px] ${tone}"><svg class="h-[32px] w-[28px]"><use href="#trash"/></svg></div></div>`;
const grey = t => `<span class="text-[#b8b8b8]">${t}</span>`;
const dash = t => `<span class="text-[#b8b8b8] tracking-[1.3px]">${t}</span>`;
const colour = (c, t) => `<i class="mr-[7px] h-[22px] w-[42px] border-2 border-black" style="background:${c}"></i><span class="tracking-[0.7px]">${t}</span>`;
const orangeNet = '<svg class="mr-[8px] ml-[3px] h-[32px] w-[28px]" viewBox="0 0 28 32" fill="#fbc184" stroke="#fbc184"><path d="M20 4L5 16l17 11M20 4l-3 14-13-2M9 6l8 12" stroke-width="2.500" fill="none"/><circle cx="20" cy="4" r="3.200"/><circle cx="8" cy="7" r="3.200"/><circle cx="4" cy="16" r="3.200"/><circle cx="17" cy="18" r="3.600"/><circle cx="10" cy="24" r="2.300"/><circle cx="22" cy="28" r="3.200"/></svg>';
const info = '<svg class="h-[28px] w-[28px]" viewBox="0 0 28 28"><circle cx="14" cy="14" r="14" fill="#5f95bb"/><path d="M11.500 5h5v4h-5zM10 11.500h6.500v8H19V22H9.500v-2.500h2v-5.500H10z" fill="#fff"/></svg>';
document.getElementById('props').innerHTML = [
  row(cell(swatch('#cccccc')), cell(), 'Border Paint', L), line,
  row(cell('<span class="text-[28px] tracking-[1.5px]">0.0</span>'), cell(), 'Border Width', L), line,
  row(cell(swatch('#89d0f5')), blue(dots), 'Fill Color', D),
  sub([['Column', orangeNet + grey('targetType')], ['Mapping Type', grey('Discrete Mapping')], ['letter', colour('#FEB24C', 'R:254 G:178 B:76 - #FEB24C')], ['literary', colour('#CCEBC5', 'R:204 G:235 B:197 - #CCEBC5')]], ''), thick,
  row(flat, flat, 'Height', info, {fg: 'text-[#888888]', pad: 'pr-[69px]'}), line,
  row(cell(), cell(), 'Image/Chart 1', L), line,
  row(cell(), cell(pass), 'Label', L), line,
  row(cell(swatch('#000000')), cell(), 'Label Color', L), line,
  row(cell('<span class="text-[35px]">16</span>'), blue(''), 'Label Font Size', D),
  sub([['Column', dash('-- select value --')], ['Mapping Type', dash('-- select value --')]], 'text-[#c0c0c0]'), thick,
  row(cell('<div class="h-[50px] w-[50px] rounded-full border-4 border-black"></div>'), blue(dots), 'Shape', D),
  sub([['', ''], ['', ''], ['', ''], ['', '']], ''), thick,
  row(cell(), cell(), '', D, {bg: 'bg-[#e0e4ff]'}),
  sub([['', ''], ['', ''], ['', '']], '')
].join('');

/* align / distribute / stack buttons: [lines, rects] in a 56x38 box */
const R = (x1, y1, x2, y2) => `M${x1} ${y1}H${x2}V${y2}H${x1}z`;
const sets = {
  'Align:': ['M13 4v27' + R(19,6,31,16) + R(19,20,43,29), 'M29 3v3M29 16v4M29 29v3' + R(23,6,35,16) + R(17,20,41,29), 'M43 4v27' + R(27,6,39,16) + R(15,20,39,29), 'M12 8h34' + R(16,12,27,29) + R(34,13,41,21), 'M9 18h7M27 18h6M41 18h6' + R(16,10,27,27) + R(33,15,41,22), 'M12 29h34' + R(16,9,27,25) + R(33,16,42,25)],
  'Distribute:': ['M19 8v22M33 8v22' + R(19,12,27,26) + R(33,14,41,23), 'M20.500 8v4M20.500 26v4M35 8v6M35 23v7' + R(17,12,24,26) + R(31,14,39,23), 'M25 8v22M39 8v22' + R(17,12,25,26) + R(32,14,39,23), 'M7 6.500h41M7 20.500h41' + R(22,6.500,35,15) + R(16,20.500,41,29), 'M8 10.500h14M35 10.500h13M8 24.500h7M42 24.500h6' + R(22,6.500,35,15) + R(15,20.500,42,29), 'M8 14.500h40M8 28.500h40' + R(22,7,35,14.500) + R(15,20.500,41,28.500)],
  'Stack:': [R(16,11,29,20) + R(16,22,41,30), R(23,11,35,20) + R(17,22,41,30), R(28,11,40,20) + R(17,22,40,30), R(18,6,27,31) + R(29,7,37,18), R(18,6,27,31) + R(28,12,37,26), R(19,6,26,31) + R(28,19,37,31)]
};
document.getElementById('align').innerHTML = Object.entries(sets).map(([k, v]) => `<div class="flex h-[38px] items-center"><span class="w-[248px]">${k}</span><div class="flex gap-[8px]">${v.map(d => `<svg class="h-[38px] w-[56px] border-2 border-[#999999] bg-[#a9a9a9]" viewBox="2 2 52 34" fill="none"><path d="${d}" stroke="#bcbcbc" stroke-width="1.500" transform="translate(1.300 1.300)"/><path d="${d}" stroke="#838383" stroke-width="1.800"/></svg>`).join('')}</div></div>`).join('');

/* node table */
const data = [
 ['sonnet-13','sonnet-13','sonnet','','0.2955192856244574','114','1.738255033557047','0.5752895752895753'],
 ['sonnet-6','sonnet-6','sonnet','','0.17344495656003578','69','2.0067114093959733','0.4983277591973244'],
 ['sonnet-10','sonnet-10','sonnet','','0.12689302905429017','65','2.0067114093959733','0.4983277591973244'],
 ['sonnet-14','sonnet-14','sonnet','','0.13503375351560495','59','2.1677852348993287','0.4613003095975232'],
 ['sonnet-9','sonnet-9','sonnet','','0.14320622489554588','49','2.2751677852348995','0.43952802359882004'],
 ['sonnet-4','sonnet-4','sonnet','','0.039783884291615855','38','2.4630872483221475','0.40599455040871935'],
 ['sonnet-20','sonnet-20','sonnet','','0.06282925186052854','37','2.3959731543624163','0.41736694677871150'],
 ['1819-1823MRMJournal','1819-1823...','','literary','0.0428492139175166','33','1.9395973154362416','0.5155709342560554'],
 ['sonnet-11','sonnet-11','sonnet','','0.01876921893573528','33','2.5838926174496644','0.38701298701298703'],
 ['sonnet-18','sonnet-18','sonnet','','0.030461719864067188','29','2.5838926174496644','0.38701298701298703'],
 ['sonnet-2','sonnet-2','sonnet','','0.016800745186291495','28','2.597315436241611','0.3850129198966408'],
 ['sonnet-21','sonnet-21','sonnet','','0.03791076056743011','25','2.5704697986577183','0.38903394255874674'],
 ['sonnet-8','sonnet-8','sonnet','','0.015192924515949911','20','2.6778523489932886','0.37343358395989973']];
document.getElementById('rows').innerHTML = data.map(r => `<div class="flex h-[32px] shrink-0 items-center pb-[4px] pl-[12px] whitespace-nowrap"><span class="w-[298px] tracking-[0.9px]">${r[0]}</span><span class="w-[183px] ${r[3] ? 'tracking-[1.25px]' : 'tracking-[0.9px]'}">${r[1]}</span><span class="w-[256px] tracking-[0.25px]">${r[2]}</span><span class="w-[232px]">${r[3]}</span><span class="w-[321px] text-right tracking-[1.3px]">${r[4]}</span><span class="w-[170px] text-right tracking-[1.3px]">${r[5]}</span><span class="w-[392px] text-right tracking-[1.3px]">${r[6]}</span><span class="w-[238px] overflow-hidden py-1 text-left tracking-[1.3px] ${r[7].length > 18 ? 'pl-[50px]' : 'pl-[64px]'}">${r[7]}</span></div>`).join('');
document.getElementById('gutter').innerHTML = data.map(() => '<div class="h-[32px] shrink-0 border-b-2 border-[#d3d3d3]"></div>').join('');

/* network graph */
let seed = 20231;
const rnd = () => (seed = (seed * 1664525 + 1013904223) >>> 0) / 4294967296;
const leftUp = '1819-01-12_Elford 1819-02-13_Haydon 1819-07-05-MWebb 1821-07-01_Elford 1819-12-10-f392-MrsMitford 1819-12-09_MWebb 1821-02-08_Elford 1825-01-07_Talfourd 1821-11-06-Talfourd 1819-03-13_Elford 1820-01-30-Elford 1822-07-23-Talfourd 1822_09_22_Haydon 1821-08-30_Elford 1821-04-19-Talfourd 1823-04-09_Hamilton 1820-12-19-MWebb 1823-08-24-Haydon 1822-06-13-BRHaydon 1819-01-20-MaryWebb 1823-10-02_Unknown'.split(' ');
const leftDown = '1815-04-03_Elford 1821-03-22-Elford 1819-04-19_MWebb 1822-03-02-Elford 1819-11-06_BRHaydon 1823-08-21_Elford 1821-01-07-BRHaydon 1819-11-05-MWebb 1821-02-09-BRHaydon 1819-08-02_MWebb 1821-03-10-BRHaydon 1820-03-20-WElford 1820-09-01_Haydon 1822-08-31_Talfourd 1819-05-30_Elford 1820-11-11-SirWilliamElford 1822-04-12-Elford 1820-08-24_Elford 1819-12-28_Elford'.split(' ');
const rightUp = 'WebbMiss_undated_letter3 1820-12-12_Elford 1820-07-05_WElford 1822-07-31_Elford 1819-09-12_WElford 1824-06-13-Talfourd 1821-11-09_Talfourd 1825-05-11-Talfourd 1821-11-30_Talfourd 1821-11-16-Talfourd 1823-05-13_Elford 1822-04-28-Elford 1821-11-22-Talfourd 1825-08-12Talfourd 1819-09-26_Elford 1820-02-11-MWebb 1819-02-18_Elford 1821-03-04_Elford 1820-04-09-Elford 1821-06-03-Talfourd 1819-01-04-MaryWebb'.split(' ');
const rightDown = '1820-12-08-MWebb 1820-11-27-SirWilliamElford 1824-02-09_BRHaydon 1821-05-02-BRHaydon 1818-01-12_WElford 1819-04-08_Elford 1820-01-24-SirWilliamElford 1819-02-27_Elford 1821-04-20_Elford 1821-04-18-BRHaydon 1819-12-04_Elford 1819-07-28-f377-Elford 1820-09-30-Elford 1823-04-03-G-Mitford 1821-06-21_Talfourd 1821-07-31-Talfourd 1821-03-25_Haydon 1822-08-13-Talfourd 1819-02-11_Elford 1819-06-09_MWebb'.split(' ');
const step = 2 * Math.PI / 111, ring = [];
const put = (a, t) => ring.push({x: 1580 + 208 * Math.cos(a), y: 695 + 209 * Math.sin(a), t});
const spare = i => ['1819-06-0' + (i % 9 + 1) + '_MWebb', '1820-08-1' + i % 9 + '-Haydon', '1821-03-2' + i % 8 + '_Elford', '1822-05-1' + i % 9 + '-Talfourd'][i % 4];
for (let i = 0; i < 28; i++) {
  put(Math.PI + 0.017 + i * step, leftUp[i] || spare(i));
  put(Math.PI - 0.039 - i * step, leftDown[i] || spare(i + 1));
  put(-0.037 - i * step, rightUp[i] || spare(i + 2));
  if (i < 27) put(0.019 + i * step, rightDown[i] || spare(i + 3));
}
const P = '#8580bd', B = '#4292c6', K = '#dd3497', G = '#74c476', O = '#fdbe85', V = '#54278f', W = '#dadaeb';
const S = {17:[2305,653,3,5],12:[2354,503,5,8],22:[2381,502,5,6],3:[2449,542,4.5,3],15:[2460.5,567,5,4],5:[2459.6,620,6,5],1:[2405,677,4,4],16:[2378,683,6,12],7:[2283,577,7,15],8:[2408,508,7,22],21:[2290,630,8.5,26],2:[2291,551,9.5,30],18:[2351,680.7,10,38],11:[2307,529,10,48],20:[2464,593.5,11.5,30],4:[2283,604,11.5,40],9:[2329,512,15,85],14:[2430.6,521.6,16.5,90],10:[2326.6,669.7,17.5,95],6:[2428,665,18,85],13:[2447,644.5,29.5,120]};
const lit = {'Charles1_new':[1850,439,4],'OVWalksInTheCountryTHEFIRSTPRIMROSE':[1789.6,464,5],'1819-1823MRMJournal':[2185.5,464,10.5],'OVCousinMary':[2031,495,4],'OVWalksInTheCountryVIOLETING':[2058,498,4],'OVBramleyMaying':[2003,502,4],'Charles1_headnote.v.3.0':[2085.5,510,4],'OVAGreatFarmHouse':[1979,517,4],'Foscari':[2106,530,3.500],'OVMrsMosse':[1961,539,2],'OVTomCordery':[2118.6,555,2],'Rienzi_headnote.v2':[2117.7,611,1],'OVEllen':[1959.6,621.5,4.5],'OVAuntMartha':[1977,644.5,4],'OVOurVillage':[2000.7,660.7,4],'OVLucy':[2083,655,5],'OVWalksInTheCountryTHEVISIT':[2054.7,666,4],'OVWalksInTheCountryNUTTING':[1992,856,5],'1854_Intro_DramaticWorks':[2166,886.6,5]};
const tint = k => { const r = rnd(); k = +k;
  if (k === 20) return r < .35 ? K : r < .85 ? P : r < .88 ? O : B;
  if (k === 15) return r < .5 ? O : B;
  if (k === 3 || k === 5) return r < .5 ? G : P;
  if (k === 4) return r < .55 ? P : r < .85 ? B : r < .97 ? K : O;
  if (k === 18 || k === 16) return r < .5 ? P : r < .92 ? B : r < .95 ? O : K;
  if (k === 14 || k === 9 || k === 11 || k === 8) return r < .82 ? P : r < .96 ? B : r < .985 ? K : G;
  return r < .45 ? P : r < .93 ? B : r < .97 ? K : r < .975 ? G : r < .985 ? O : W; };
const edges = [];
const edge = (x1, y1, x2, y2, c, w = 1.5, z = 0) => edges.push([rnd() + z, `<path d="M${x1.toFixed(1)} ${y1.toFixed(1)}L${x2.toFixed(1)} ${y2.toFixed(1)}" stroke="${c}" stroke-width="${w}"/>`]);
const left = ring.filter(n => n.x < 1560), right = ring.filter(n => n.x >= 1560);
for (const k in S) for (let i = 0; i < S[k][3]; i++) {
  const pool = rnd() < .36 ? left : right, n = pool[Math.floor(rnd() * pool.length)], c = tint(k);
  edge(n.x, n.y, S[k][0] + (rnd() - .5) * 8, S[k][1] + (rnd() - .5) * 8, c, 1.5, c === P && (k === '14' || k === '9' || k === '11') ? .35 : 0);
}
const keys = Object.keys(S), names = Object.keys(lit);
for (const n of names.slice(3, 17)) for (let i = 0; i < 6; i++) { const s = S[keys[Math.floor(rnd() * 21)]]; edge(lit[n][0], lit[n][1], s[0], s[1], [G, G, P, B, K, G][i]); }
const fan = (n, list) => list.forEach(([k, c]) => edge(lit[n][0], lit[n][1], S[k][0], S[k][1], c, 1.6));
fan('Charles1_new', [[8,B],[21,V],[17,V],[4,K],[14,B],[9,B],[20,P],[13,K],[7,P]]);
fan('OVWalksInTheCountryTHEFIRSTPRIMROSE', [[12,B],[2,G],[7,G],[4,G],[11,G],[21,G],[17,K],[20,G],[13,G]]);
fan('1819-1823MRMJournal', [[12,P],[22,B],[8,P],[14,P],[3,G],[15,O],[20,K],[13,B],[5,P],[6,P],[18,O],[1,O],[9,G],[11,K],[2,P],[7,G],[10,B],[16,P],[21,O],[14,O]]);
fan('OVWalksInTheCountryNUTTING', [[4,B],[21,G],[13,B],[6,G],[20,O],[18,B],[14,G],[10,B]]);
fan('1854_Intro_DramaticWorks', [[4,O],[2,P],[7,B],[11,K],[9,O],[14,P],[12,P],[10,B],[8,B],[20,K],[13,B],[21,P]]);
for (let i = 0; i < 30; i++) edge(S[4][0] + rnd() * 60, 575 + rnd() * 75, S[20][0], S[20][1], K, 1.6, .2);
for (let i = 0; i < 14; i++) edge(2100 + rnd() * 180, 560 + rnd() * 90, S[i % 2 ? 3 : 20][0], S[i % 2 ? 3 : 20][1], G);
for (let i = 0; i < 5; i++) edge(1789, 690 + i * 9, S[18][0], S[18][1], O, 1.8, .4);
for (let i = 0; i < 4; i++) edge(2200 + i * 20, 618 - i * 4, S[15][0], S[15][1] + i, O, 2, .4);
edges.sort((a, b) => a[0] - b[0]);
let g = '<g fill="none">' + edges.map(e => e[1]).join('') + '</g>';
for (const n of ring) g += `<ellipse cx="${n.x.toFixed(1)}" cy="${n.y.toFixed(1)}" rx="4" ry="4.500" fill="#fdb04b"/>`;
for (const n of ring) g += `<text x="${n.x.toFixed(1)}" y="${(n.y + 4).toFixed(1)}" letter-spacing="0.4">${n.t}</text>`;
for (const n of names) g += `<circle cx="${lit[n][0]}" cy="${lit[n][1]}" r="${lit[n][2]}" fill="#ccebc5"/><text x="${lit[n][0]}" y="${lit[n][1] + 4.5}">${n}</text>`;
for (const k of ['17','12','22','3','15','5','1','16','18','7','8','21','2','11','20','4','9','14','10','6','13']) { const s = S[k]; g += `<circle cx="${s[0]}" cy="${s[1]}" r="${s[2]}" fill="#89d0f5"/><text x="${s[0] - (k === '6' ? 5 : 0)}" y="${s[1] + 4.5}" letter-spacing="0.3">sonnet-${k}</text>`; }
document.getElementById('net').innerHTML = g;
</script>
</body>
</html>
